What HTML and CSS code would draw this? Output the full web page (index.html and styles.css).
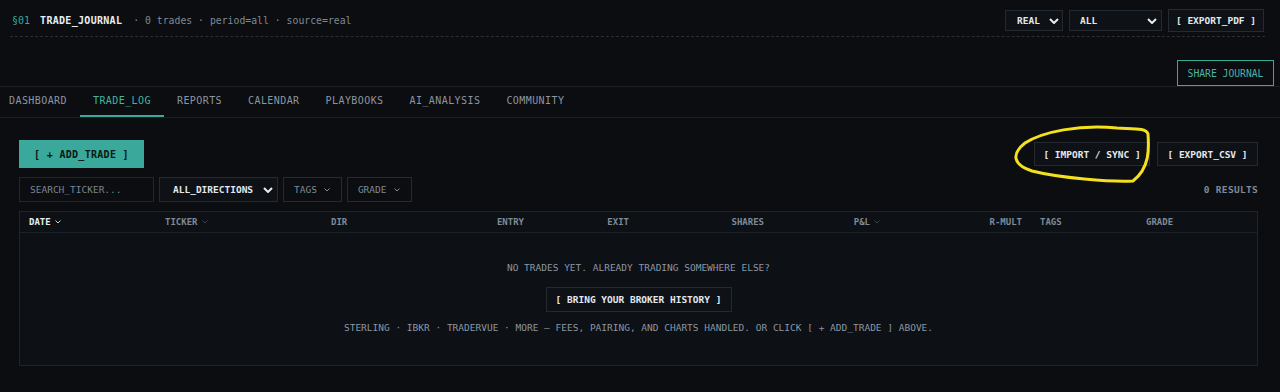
FILE: index.html
```html
<!DOCTYPE html>
<html lang="en">
<head>
    <meta charset="UTF-8">
    <meta name="viewport" content="width=device-width, initial-scale=1.0">
    <title>Trade Journal</title>

    <link rel="stylesheet" href="styles.css">
</head>
<body>

<div class="page">

    <div class="top_bar">
        <div class="top_left">
            <span class="section_no">§01</span>
            <span class="journal_title">TRADE_JOURNAL</span>
            <span class="journal_meta">· 0 trades · period=all · source=real</span>
        </div>
        <div class="top_right">
            <div class="select select_real">REAL
                <svg class="chev_big" viewBox="0 0 10 6"><path d="M1 1 L5 5 L9 1"/></svg>
            </div>
            <div class="select select_all">ALL
                <svg class="chev_big" viewBox="0 0 10 6"><path d="M1 1 L5 5 L9 1"/></svg>
            </div>
            <button class="btn btn_pdf">[ EXPORT_PDF ]</button>
        </div>
    </div>

    <div class="share_row">
        <button class="btn_share">SHARE JOURNAL</button>
    </div>

    <div class="tabs">
        <div class="tab">DASHBOARD</div>
        <div class="tab tab_active">TRADE_LOG</div>
        <div class="tab">REPORTS</div>
        <div class="tab">CALENDAR</div>
        <div class="tab">PLAYBOOKS</div>
        <div class="tab">AI_ANALYSIS</div>
        <div class="tab">COMMUNITY</div>
    </div>

    <div class="content">

        <div class="action_row">
            <button class="btn_add">[ + ADD_TRADE ]</button>
            <div class="action_right">
                <button class="btn btn_import">[ IMPORT / SYNC ]</button>
                <button class="btn btn_csv">[ EXPORT_CSV ]</button>
            </div>
        </div>

        <div class="filter_row">
            <div class="filters">
                <div class="search">SEARCH_TICKER...</div>
                <div class="select select_dir">ALL_DIRECTIONS
                    <svg class="chev_big" viewBox="0 0 10 6"><path d="M1 1 L5 5 L9 1"/></svg>
                </div>
                <div class="select select_small">TAGS
                    <svg class="chev_small" viewBox="0 0 6 4"><path d="M0.5 0.5 L3 3 L5.5 0.5"/></svg>
                </div>
                <div class="select select_small">GRADE
                    <svg class="chev_small" viewBox="0 0 6 4"><path d="M0.5 0.5 L3 3 L5.5 0.5"/></svg>
                </div>
            </div>
            <div class="results">0 RESULTS</div>
        </div>

        <div class="trade_table">
            <div class="table_head">
                <div class="th th_sorted">DATE <svg class="chev_sort" viewBox="0 0 6 4"><path d="M0.5 0.5 L3 3 L5.5 0.5"/></svg></div>
                <div class="th">TICKER <svg class="chev_sort dim" viewBox="0 0 6 4"><path d="M0.5 0.5 L3 3 L5.5 0.5"/></svg></div>
                <div class="th">DIR</div>
                <div class="th th_right">ENTRY</div>
                <div class="th th_right">EXIT</div>
                <div class="th th_right">SHARES</div>
                <div class="th th_right">P&amp;L <svg class="chev_sort dim" viewBox="0 0 6 4"><path d="M0.5 0.5 L3 3 L5.5 0.5"/></svg></div>
                <div class="th th_right">R-MULT</div>
                <div class="th">TAGS</div>
                <div class="th">GRADE</div>
            </div>

            <div class="empty_state">
                <div class="empty_line">NO TRADES YET. ALREADY TRADING SOMEWHERE ELSE?</div>
                <button class="btn btn_broker">[ BRING YOUR BROKER HISTORY ]</button>
                <div class="empty_line">STERLING · IBKR · TRADERVUE · MORE — FEES, PAIRING, AND CHARTS HANDLED. OR CLICK [ + ADD_TRADE ] ABOVE.</div>
            </div>
        </div>

    </div>

    <!-- hand drawn marker on top of the screenshot -->
    <svg class="marker" viewBox="0 0 160 72">
        <path d="M25 25 C 42 14, 80 6, 117 10 C 135 11, 146 10, 148 16 C 149 30, 150 50, 133 63 C 110 64, 60 60, 32 53 C 13 47, 11 36, 25 25"/>
    </svg>

</div>

</body>
</html>
```

FILE: styles.css
```css
body{
    margin: 0;
    background-color: #0b0d10;
    color: #8b96a3;
    font-family: "DejaVu Sans Mono", "Liberation Mono", monospace;
    font-size: 9.5px;
}

.page{
    position: relative;
    height: 392px;
    overflow: hidden;
}

button{
    font-family: inherit;
    cursor: pointer;
    white-space: nowrap;
}

/* top bar */

.top_bar{
    display: flex;
    justify-content: space-between;
    align-items: center;
    margin: 0 15px 0 10px;
    padding: 9px 1px 4px 2px;
    border-bottom: 1px dashed #2a2f37;
}

.top_left{
    display: flex;
    align-items: center;
    font-size: 10px;
}

.section_no{
    color: #3aa99a;
    margin-right: 10px;
}

.journal_title{
    color: #e8edf2;
    font-weight: bold;
    letter-spacing: 0.3px;
    margin-right: 11px;
}

.journal_meta{
    color: #7f8a97;
    font-size: 9.8px;
}

.top_right{
    display: flex;
    align-items: center;
    gap: 6px;
}

.select{
    display: flex;
    align-items: center;
    justify-content: space-between;
    box-sizing: border-box;
    background-color: #0e1116;
    border: 1px solid #252a31;
    color: #e2e8ee;
    font-weight: bold;
}

.select_real{
    width: 58px;
    height: 21px;
    padding: 0 3px 0 11px;
}

.select_all{
    width: 93px;
    height: 21px;
    padding: 0 4px 0 10px;
}

.chev_big{
    width: 10px;
    height: 6px;
    fill: none;
    stroke: #e8edf2;
    stroke-width: 2;
}

.chev_small{
    width: 6px;
    height: 4px;
    fill: none;
    stroke: #7f8a97;
    stroke-width: 1;
    margin-left: 7px;
}

.btn{
    box-sizing: border-box;
    background-color: #0e1116;
    border: 1px solid #252a31;
    color: #e2e8ee;
    font-size: 9.5px;
    font-weight: bold;
    padding: 0;
}

.btn_pdf{
    height: 23px;
    width: 96px;
}

/* share */

.share_row{
    display: flex;
    justify-content: flex-end;
    padding: 23px 6px 0 0;
}

.btn_share{
    box-sizing: border-box;
    height: 26px;
    width: 97px;
    background-color: transparent;
    border: 1px solid #3aa99a;
    color: #4bb3a4;
    font-size: 9.7px;
    padding: 0;
}

/* tabs */

.tabs{
    display: flex;
    border-top: 1px solid #1c2026;
    border-bottom: 1px solid #1c2026;
}

.tab{
    box-sizing: border-box;
    height: 30px;
    line-height: 28px;
    padding: 0 13px;
    font-size: 10px;
    letter-spacing: 0.42px;
    color: #8b96a3;
}

.tab:first-child{
    padding-left: 9px;
}

.tab_active{
    color: #45b3a3;
    border-bottom: 2px solid #3aa99a;
}

/* content */

.content{
    padding: 22px 22px 0 19px;
}

.action_row{
    display: flex;
    justify-content: space-between;
    align-items: center;
}

.btn_add{
    height: 28px;
    width: 125px;
    background-color: #3aa89a;
    border: none;
    color: #0a1714;
    font-size: 10px;
    font-weight: bold;
    letter-spacing: 0.3px;
    padding: 0;
}

.action_right{
    display: flex;
    gap: 7px;
}

.btn_import{
    height: 24px;
    width: 116px;
}

.btn_csv{
    height: 24px;
    width: 101px;
}

.filter_row{
    display: flex;
    justify-content: space-between;
    align-items: center;
    margin-top: 9px;
}

.filters{
    display: flex;
    gap: 5px;
}

.search{
    box-sizing: border-box;
    width: 135px;
    height: 25px;
    line-height: 23px;
    padding-left: 10px;
    background-color: #0b0d10;
    border: 1px solid #22272e;
    color: #7a8591;
}

.select_dir{
    width: 119px;
    height: 25px;
    padding: 0 4px 0 13px;
}

.select_small{
    height: 25px;
    padding: 0 11px 0 10px;
    color: #7f8a97;
    font-weight: normal;
    justify-content: flex-start;
    background-color: #0b0d10;
}

.results{
    color: #7f8a97;
    font-weight: bold;
    letter-spacing: 0.3px;
}

/* table */

.trade_table{
    margin-top: 9px;
    background-color: #0d1014;
    border: 1px solid #1f242b;
}

.table_head{
    display: grid;
    grid-template-columns: 136px 166px 111px 100px 105px 135px 116px 142px 106px 1fr;
    height: 20px;
    border-bottom: 1px solid #1c2127;
}

.th{
    display: flex;
    align-items: center;
    padding: 0 9px;
    font-size: 9px;
    color: #7f8a97;
    font-weight: bold;
}

.th_right{
    justify-content: flex-end;
}

.th_sorted{
    color: #e8edf2;
}

.chev_sort{
    width: 6px;
    height: 4px;
    fill: none;
    stroke: #c9d1d9;
    stroke-width: 1;
    margin-left: 4px;
}

.chev_sort.dim{
    stroke: #3c434c;
}

.empty_state{
    display: flex;
    flex-direction: column;
    align-items: center;
    padding: 29px 0 31px 0;
}

.empty_line{
    line-height: 12px;
    color: #8b96a3;
}

.btn_broker{
    height: 25px;
    width: 186px;
    margin: 13px 0 10px 0;
}

/* marker */

.marker{
    position: absolute;
    left: 1000px;
    top: 118px;
    width: 160px;
    height: 72px;
    fill: none;
    stroke: #f4e01c;
    stroke-width: 3;
    stroke-linecap: round;
}
```
